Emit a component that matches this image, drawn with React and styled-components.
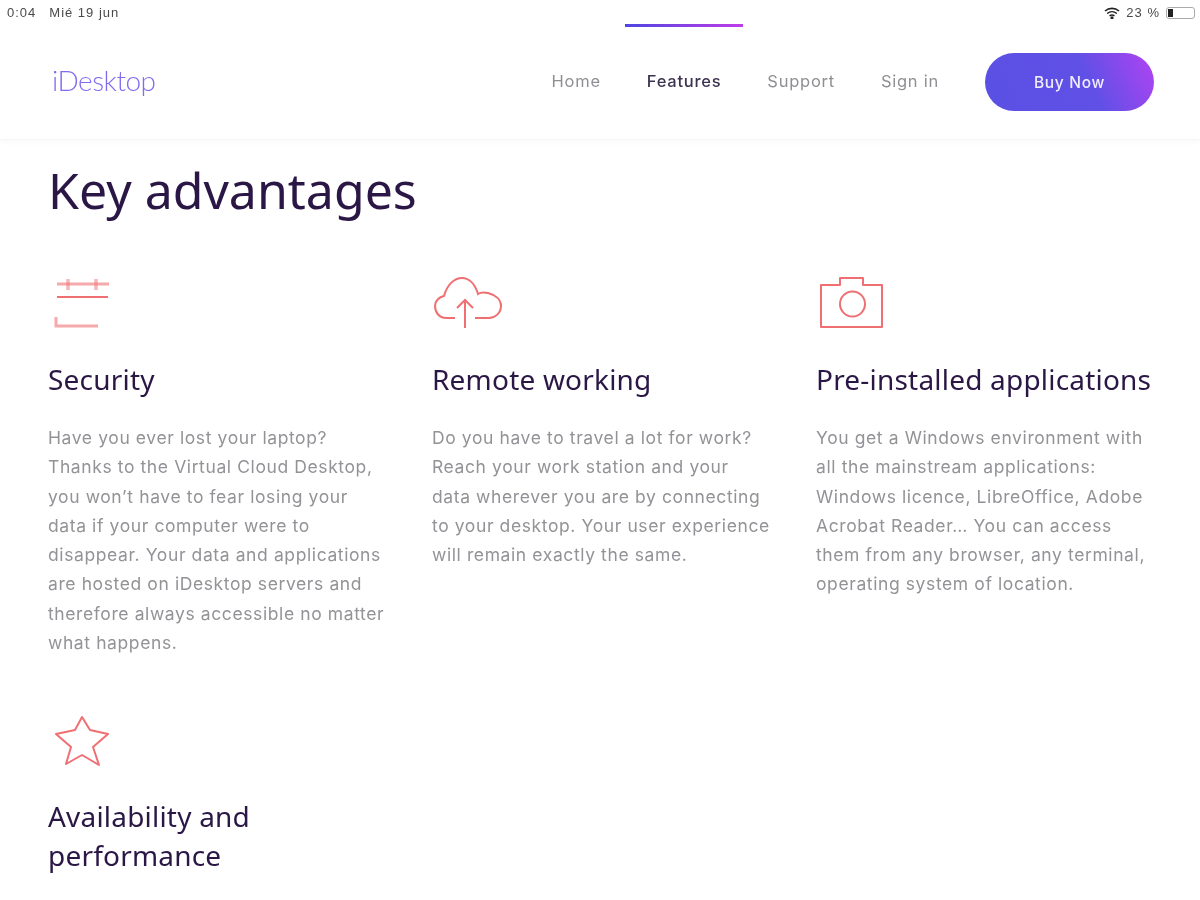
import React from 'react'
import styled, { createGlobalStyle } from 'styled-components'

const GlobalStyle = createGlobalStyle`
  html, body { margin: 0; padding: 0; background: #fff; }
  body { font-family: "Open Sans", "Liberation Sans", sans-serif; overflow: hidden; }
`

const Page = styled.div`
  width: 1200px;
  height: 900px;
  overflow: hidden;
  background: #fff;
  filter: blur(0.5px);
`

const Top = styled.header`
  height: 140px;
  box-sizing: border-box;
  border-bottom: 1px solid #f6f6f8;
  box-shadow: 0 2px 6px rgba(40, 20, 80, 0.03);
`

const StatusBar = styled.div`
  height: 25px;
  padding: 0 5px 0 7px;
  display: flex;
  align-items: center;
  justify-content: space-between;
  font-family: "Liberation Sans", sans-serif;
  font-size: 13px;
  letter-spacing: 1px;
  color: #4a4a4a;
`

const StatusGroup = styled.div`
  display: flex;
  align-items: center;
  gap: ${p => p.$gap || 6}px;
`

const Nav = styled.nav`
  height: 114px;
  box-sizing: border-box;
  padding: 0 46px 0 52px;
  display: flex;
  align-items: center;
  justify-content: space-between;
`

const Logo = styled.div`
  font-family: "Lato", sans-serif;
  font-weight: 300;
  font-size: 28px;
  letter-spacing: -0.5px;
  color: #836bf0;
  margin-top: -5px;
`

const Links = styled.div`
  display: flex;
  align-items: center;
  gap: 46px;
`

const NavLink = styled.a`
  position: relative;
  font-family: "Inter", sans-serif;
  font-size: 16.5px;
  letter-spacing: 0.75px;
  margin-top: -2px;
  color: ${p => (p.$active ? '#3d3350' : '#8f8f93')};
  font-weight: ${p => (p.$active ? 500 : 400)};

  ${p => p.$active && `
    &::before {
      content: "";
      position: absolute;
      top: -47px;
      left: -22px;
      right: -22px;
      height: 3px;
      background: linear-gradient(90deg, #4f45e0, #c03ce8);
    }
  `}
`

const BuyButton = styled.button`
  width: 169px;
  height: 58px;
  border: 0;
  border-radius: 29px;
  background: linear-gradient(65deg, #5a50e4 0%, #6050e6 60%, #b143f2 100%);
  color: #f1edff;
  font-family: "Inter", sans-serif;
  font-size: 15.5px;
  font-weight: 500;
  letter-spacing: 0.7px;
`

const Content = styled.main`
  padding: 21px 0 0 48px;
`

const Title = styled.h1`
  margin: 0;
  font-family: "Noto Sans", sans-serif;
  font-size: 50px;
  line-height: 58px;
  font-weight: 400;
  color: #2a1745;
`

const Grid = styled.div`
  margin-top: 53px;
  display: grid;
  grid-template-columns: repeat(3, 384px);
  row-gap: 52px;
`

const Feature = styled.section`
  min-width: 0;
`

const IconBox = styled.div`
  width: 70px;
  height: 60px;
  svg { display: block; }
`

const FeatureTitle = styled.h2`
  margin: 28px 0 0;
  font-family: "Noto Sans", sans-serif;
  font-size: 28px;
  line-height: 39px;
  letter-spacing: 0.2px;
  font-weight: 400;
  color: #2a1745;
  white-space: nowrap;
`

const Body = styled.p`
  margin: 24px 0 0;
  font-family: "Inter", sans-serif;
  font-size: 17.5px;
  line-height: 29.3px;
  letter-spacing: 0.6px;
  color: #939397;
  white-space: nowrap;
`

const stroke = { fill: 'none', stroke: '#ef6f72', strokeWidth: 2 }

const CalendarIcon = () => (
  <svg width="70" height="60" viewBox="0 0 70 60" {...stroke}>
    <path d="M9 12H61" opacity=".6" strokeWidth="3" />
    <path d="M20 7V18M48 7V18" opacity=".5" strokeWidth="3.5" />
    <path d="M9 25H60" />
    <path d="M8 45V54H50" opacity=".6" strokeWidth="3" />
  </svg>
)

const CloudIcon = () => (
  <svg width="70" height="60" viewBox="0 0 70 60" {...stroke}>
    <path d="M23 46H14C7 46 3 40 3 34C3 29 7 25 12 24C15 13 22 6 30 6C37 6 43 12 46 22C48 20.5 52 20 56 21C64 23 69 28 69 34C69 41 63 46 57 46H43" />
    <path d="M33 56V28M25 36L33 28L41 36" />
  </svg>
)

const CameraIcon = () => (
  <svg width="70" height="60" viewBox="0 0 70 60" {...stroke}>
    <path d="M5 13H24V6H47V13H66V55H5Z" strokeLinejoin="round" />
    <circle cx="36.5" cy="32" r="12.5" />
  </svg>
)

const StarIcon = () => (
  <svg width="70" height="60" viewBox="0 0 70 60" {...stroke}>
    <path d="M34 8L42 21L60 25L45 38L51 56L34 46L18 55L23 38L8 25L27 21Z" strokeLinejoin="round" />
  </svg>
)

const WifiIcon = () => (
  <svg width="16" height="12" viewBox="0 0 16 12" fill="none" stroke="#222" strokeWidth="1.6">
    <path d="M1 4C5 0.5 11 0.5 15 4M3.2 6.5C6 4.2 10 4.2 12.8 6.5M5.5 8.8C7 7.8 9 7.8 10.5 8.8" />
    <circle cx="8" cy="10.8" r="0.8" fill="#222" />
  </svg>
)

const BatteryShell = styled.div`
  width: 29px;
  height: 12px;
  box-sizing: border-box;
  border: 1px solid #aaa;
  border-radius: 3px;
  padding: 1px;
  display: flex;
`

const BatteryLevel = styled.div`
  width: 5px;
  background: #222;
`

const features = [
  {
    icon: <CalendarIcon />,
    title: ['Security'],
    body: [
      'Have you ever lost your laptop?',
      'Thanks to the Virtual Cloud Desktop,',
      'you won’t have to fear losing your',
      'data if your computer were to',
      'disappear. Your data and applications',
      'are hosted on iDesktop servers and',
      'therefore always accessible no matter',
      'what happens.',
    ],
  },
  {
    icon: <CloudIcon />,
    title: ['Remote working'],
    body: [
      'Do you have to travel a lot for work?',
      'Reach your work station and your',
      'data wherever you are by connecting',
      'to your desktop. Your user experience',
      'will remain exactly the same.',
    ],
  },
  {
    icon: <CameraIcon />,
    title: ['Pre-installed applications'],
    body: [
      'You get a Windows environment with',
      'all the mainstream applications:',
      'Windows licence, LibreOffice, Adobe',
      'Acrobat Reader… You can access',
      'them from any browser, any terminal,',
      'operating system of location.',
    ],
  },
  {
    icon: <StarIcon />,
    title: ['Availability and', 'performance'],
    body: [],
  },
]

const withBreaks = lines =>
  lines.map((line, i) => (
    <React.Fragment key={line}>
      {i > 0 && <br />}
      {line}
    </React.Fragment>
  ))

export default function App() {
  return (
    <Page>
      <GlobalStyle />
      <Top>
        <StatusBar>
          <StatusGroup $gap={13}>
            <span>0:04</span>
            <span>Mié 19 jun</span>
          </StatusGroup>
          <StatusGroup>
            <WifiIcon />
            <span>23 %</span>
            <BatteryShell><BatteryLevel /></BatteryShell>
          </StatusGroup>
        </StatusBar>
        <Nav>
          <Logo>iDesktop</Logo>
          <Links>
            <NavLink>Home</NavLink>
            <NavLink $active>Features</NavLink>
            <NavLink>Support</NavLink>
            <NavLink>Sign in</NavLink>
            <BuyButton>Buy Now</BuyButton>
          </Links>
        </Nav>
      </Top>
      <Content>
        <Title>Key advantages</Title>
        <Grid>
          {features.map(f => (
            <Feature key={f.title[0]}>
              <IconBox>{f.icon}</IconBox>
              <FeatureTitle>{withBreaks(f.title)}</FeatureTitle>
              {f.body.length > 0 && <Body>{withBreaks(f.body)}</Body>}
            </Feature>
          ))}
        </Grid>
      </Content>
    </Page>
  )
}
